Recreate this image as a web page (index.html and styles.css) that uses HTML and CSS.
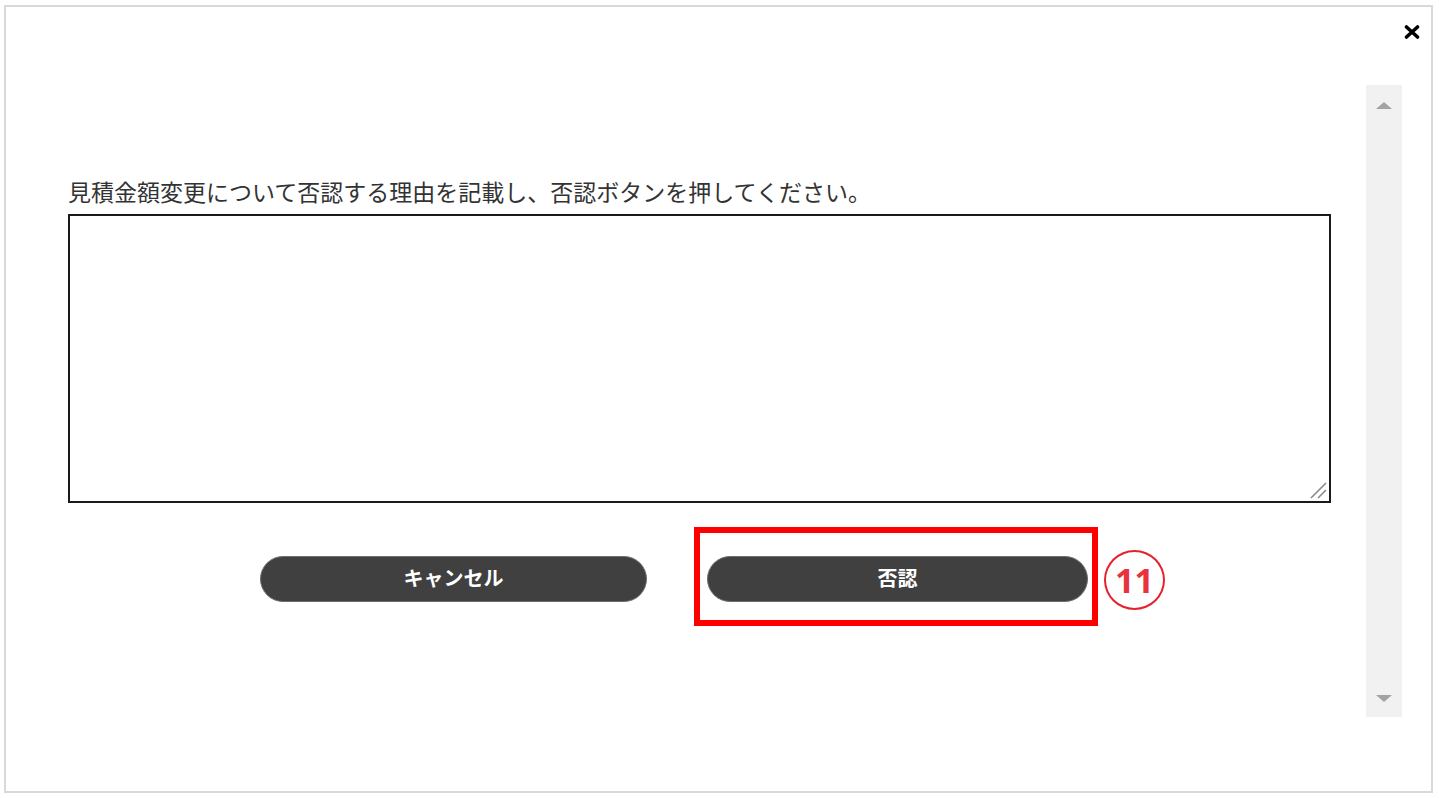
FILE: index.html
```html
<!DOCTYPE html>
<html lang="ja">
  <head>
    <meta charset="utf-8">
    <title>否認</title>
    <link rel="stylesheet" href="styles.css">
  </head>
  <body>
    <div class="dialog">
      <div class="dialog-head">
        <button class="close" type="button" aria-label="閉じる">
          <svg width="16" height="14" viewBox="0 0 16 14">
            <path d="M2.5 2 L13.5 12 M13.5 2 L2.5 12" stroke="#000" stroke-width="3.6" stroke-linecap="round"/>
          </svg>
        </button>
      </div>
      <div class="dialog-body">
        <div class="content">
          <p class="label">見積金額変更について否認する理由を記載し、否認ボタンを押してください。</p>
          <div class="field">
            <textarea class="reason"></textarea>
            <svg class="grip" width="20" height="20" viewBox="0 0 20 20">
              <path d="M3 18 L18 3 M10 18 L18 10" stroke="#8a8a8a" stroke-width="1.6"/>
            </svg>
          </div>
          <div class="actions">
            <button class="btn" type="button">キャンセル</button>
            <div class="deny-wrap">
              <button class="btn btn-deny" type="button">否認</button>
              <span class="highlight"></span>
              <span class="marker">11</span>
            </div>
          </div>
        </div>
        <div class="scrollbar">
          <span class="arrow up"></span>
          <span class="arrow down"></span>
        </div>
      </div>
    </div>
  </body>
</html>
```
FILE: styles.css
```css
* {
  margin:0;
  padding:0;
  box-sizing: border-box;
}
body {
  background: #fff;
  padding: 5px 0 0 4px;
  font-family: "Noto Sans CJK JP", "Noto Sans", sans-serif;
  color: #333;
}
.dialog {
  width: 1429px;
  height: 788px;
  border: 2px solid #d9d9d9;
  display: flex;
  flex-direction: column;
}
.dialog-head {
  height: 78px;
  display: flex;
  justify-content: flex-end;
  align-items: flex-start;
  padding: 18px 11px 0 0;
}
.close {
  border: none;
  background: none;
  width: 16px;
  height: 14px;
  display: block;
}
.close svg {
  display: block;
}
.dialog-body {
  height: 632px;
  display: flex;
  padding-right: 29px;
}
.content {
  flex: 1;
  padding: 91px 0 0 62px;
}
.label {
  font-size: 23px;
  line-height: 30px;
  color: #333;
  margin-bottom: 8px;
  white-space: nowrap;
}
.field {
  position: relative;
  width: 1263px;
}
.reason {
  display: block;
  width: 1263px;
  height: 289px;
  border: 2px solid #1a1a1a;
  background: #fff;
  resize: none;
}
.grip {
  position: absolute;
  right: 3px;
  bottom: 3px;
}
.actions {
  display: flex;
  gap: 60px;
  margin-top: 53px;
  padding-left: 192px;
}
.btn {
  height: 46px;
  width: 387px;
  border-radius: 23px;
  border: 1px solid #6e6e6e;
  background: #404040;
  color: #fff;
  font-family: "Noto Sans CJK JP", sans-serif;
  font-weight: bold;
  font-size: 20px;
  padding-bottom: 3px;
}
.btn-deny {
  width: 381px;
}
.deny-wrap {
  position: relative;
}
.highlight {
  position: absolute;
  top: -29px;
  left: -13px;
  right: -10px;
  bottom: -24px;
  border: 6px solid #ff0000;
}
.marker {
  position: absolute;
  left: 397px;
  top: -6px;
  width: 61px;
  height: 60px;
  border: 2px solid #e3222c;
  border-radius: 50%;
  color: #e8323c;
  font-family: "Open Sans", sans-serif;
  font-weight: bold;
  font-size: 34px;
  line-height: 56px;
  text-align: center;
}
.scrollbar {
  width: 36px;
  background: #f1f1f1;
  display: flex;
  flex-direction: column;
  justify-content: space-between;
  align-items: center;
  padding: 17px 0 15px;
}
.arrow {
  width: 0;
  height: 0;
  border-left: 8px solid transparent;
  border-right: 8px solid transparent;
}
.arrow.up {
  border-bottom: 7px solid #a3a3a3;
}
.arrow.down {
  border-top: 7px solid #a3a3a3;
}
```
